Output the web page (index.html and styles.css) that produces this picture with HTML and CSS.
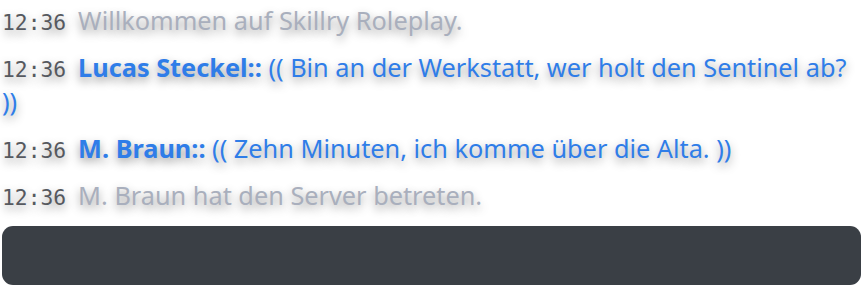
FILE: index.html
```html
<!DOCTYPE html>
<html lang="de">
<head>
<meta charset="utf-8">
<title>Chat</title>
<link rel="stylesheet" href="styles.css">
</head>
<body>
<div class="chat">
  <div class="messages">
    <div class="msg system"><span class="time">12:36</span><span class="text">Willkommen auf Skillry Roleplay.</span></div>
    <div class="msg ooc"><span class="time">12:36</span><span class="name">Lucas Steckel::</span> <span class="text">(( Bin an der Werkstatt, wer holt den Sentinel ab? ))</span></div>
    <div class="msg ooc"><span class="time">12:36</span><span class="name">M. Braun::</span> <span class="text">(( Zehn Minuten, ich komme über die Alta. ))</span></div>
    <div class="msg system"><span class="time">12:36</span><span class="text">M. Braun hat den Server betreten.</span></div>
  </div>
  <div class="input"></div>
</div>
</body>
</html>
```
FILE: styles.css
```css
html, body {
  margin: 0;
  padding: 0;
  background: #ffffff;
}
body {
  font-family: "Noto Sans", "Open Sans", sans-serif;
}
.chat {
  display: flex;
  flex-direction: column;
  padding: 3px 1px 3px 2px;
}
.messages {
  display: flex;
  flex-direction: column;
  gap: 13px;
}
.msg {
  font-size: 25.3px;
  line-height: 34px;
  text-shadow: 0 4px 10px rgba(0, 0, 0, 0.42);
}
.time {
  font-family: "DejaVu Sans Mono", monospace;
  font-size: 21.3px;
  line-height: 20px;
  color: #56595f;
  margin-right: 12px;
}
.system .text {
  color: #a9afbd;
}
.ooc .name {
  color: #2f7de8;
  font-weight: 700;
}
.ooc .text {
  color: #2f7de8;
}
.input {
  margin-top: 14px;
  height: 59px;
  background: #3a3f45;
  border-radius: 11px;
}
```
